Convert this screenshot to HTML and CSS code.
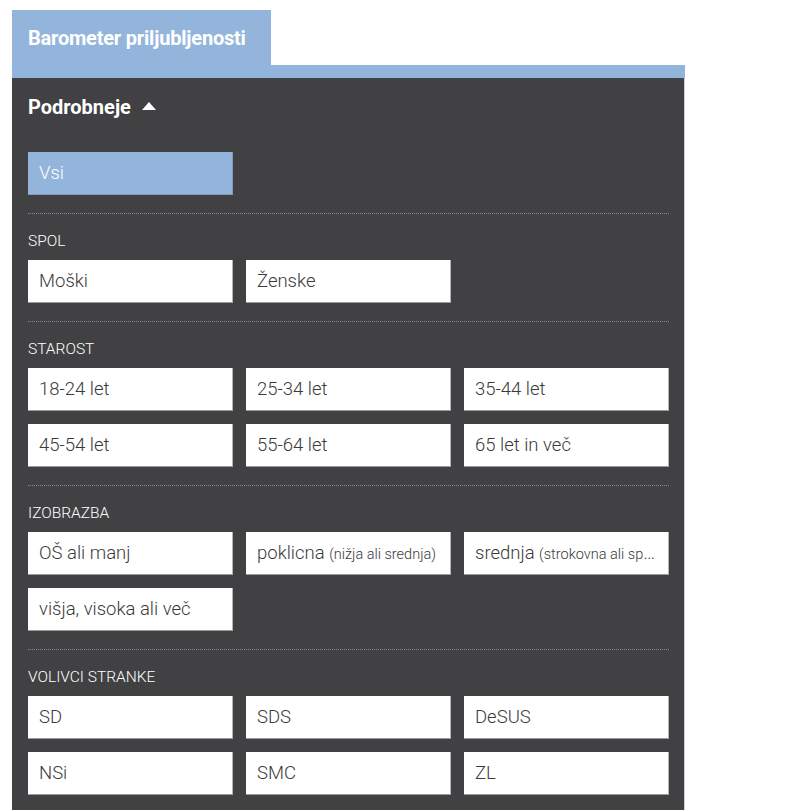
FILE: index.html
```html
<!DOCTYPE html>
<html lang="sl">
<head>
<meta charset="utf-8">
<link rel="stylesheet" href="styles.css">
</head>
<body>
<div class="widget">
  <div class="tabs"><div class="tab">Barometer priljubljenosti</div></div>
  <div class="panel">
    <div class="toggle">Podrobneje <span class="caret"></span></div>
    <div class="grid first">
      <div class="opt active">Vsi</div>
    </div>
    <div class="section">
      <div class="label">SPOL</div>
      <div class="grid">
        <div class="opt">Moški</div>
        <div class="opt">Ženske</div>
      </div>
    </div>
    <div class="section">
      <div class="label">STAROST</div>
      <div class="grid">
        <div class="opt">18-24 let</div>
        <div class="opt">25-34 let</div>
        <div class="opt">35-44 let</div>
        <div class="opt">45-54 let</div>
        <div class="opt">55-64 let</div>
        <div class="opt">65 let in več</div>
      </div>
    </div>
    <div class="section">
      <div class="label">IZOBRAZBA</div>
      <div class="grid">
        <div class="opt">OŠ ali manj</div>
        <div class="opt">poklicna <small>(nižja ali srednja)</small></div>
        <div class="opt">srednja <small>(strokovna ali splošna)</small></div>
        <div class="opt">višja, visoka ali več</div>
      </div>
    </div>
    <div class="section">
      <div class="label">VOLIVCI STRANKE</div>
      <div class="grid">
        <div class="opt">SD</div>
        <div class="opt">SDS</div>
        <div class="opt">DeSUS</div>
        <div class="opt">NSi</div>
        <div class="opt">SMC</div>
        <div class="opt">ZL</div>
      </div>
    </div>
  </div>
</div>
</body>
</html>
```
FILE: styles.css
```css
html, body { margin: 0; padding: 0; background: #fff; }
body { font-family: Roboto, "Liberation Sans", sans-serif; }
.widget { width: 673px; margin: 10px 0 0 12px; }
.tabs { border-bottom: 13px solid #94b5db; }
.tab {
  width: 259px; height: 55px; box-sizing: border-box;
  background: #94b5db; color: #fff; font-weight: bold; font-size: 20px;
  padding-left: 16px; line-height: 56px; letter-spacing: -0.2px;
}
.panel {
  background: #414143; border-right: 1px solid #cfcfcf;
  padding: 16px 15px 20px 16px; height: 760px; box-sizing: border-box;
}
.toggle {
  color: #fff; font-weight: bold; font-size: 20px; line-height: 26px;
  display: flex; align-items: center; gap: 11px;
}
.caret {
  width: 0; height: 0; border-left: 7px solid transparent; border-right: 7px solid transparent;
  border-bottom: 8px solid #fff; margin-top: -3px;
}
.grid {
  display: grid; grid-template-columns: repeat(3, 205px); gap: 13px; margin-bottom: 18px;
}
.grid.first { margin-top: 32px; }
.opt {
  height: 43px; box-sizing: border-box; background: #fff; color: #3a3a3a;
  font-size: 18.5px; font-weight: 300; line-height: 43px; padding: 0 10px 0 11px;
  border-bottom: 1px solid #9a9a9a; border-right: 1px solid #b5b5b5;
  white-space: nowrap; overflow: hidden; text-overflow: ellipsis;
}
.opt small { font-size: 14.5px; }
.opt.active { background: #94b5db; color: #fff; border-color: #7f9dc0; }
.section { border-top: 1px dotted #8a8a8a; padding-top: 17px; }
.label { color: #fff; font-size: 15.5px; font-weight: 300; line-height: 20px; margin-bottom: 9px; }
```
